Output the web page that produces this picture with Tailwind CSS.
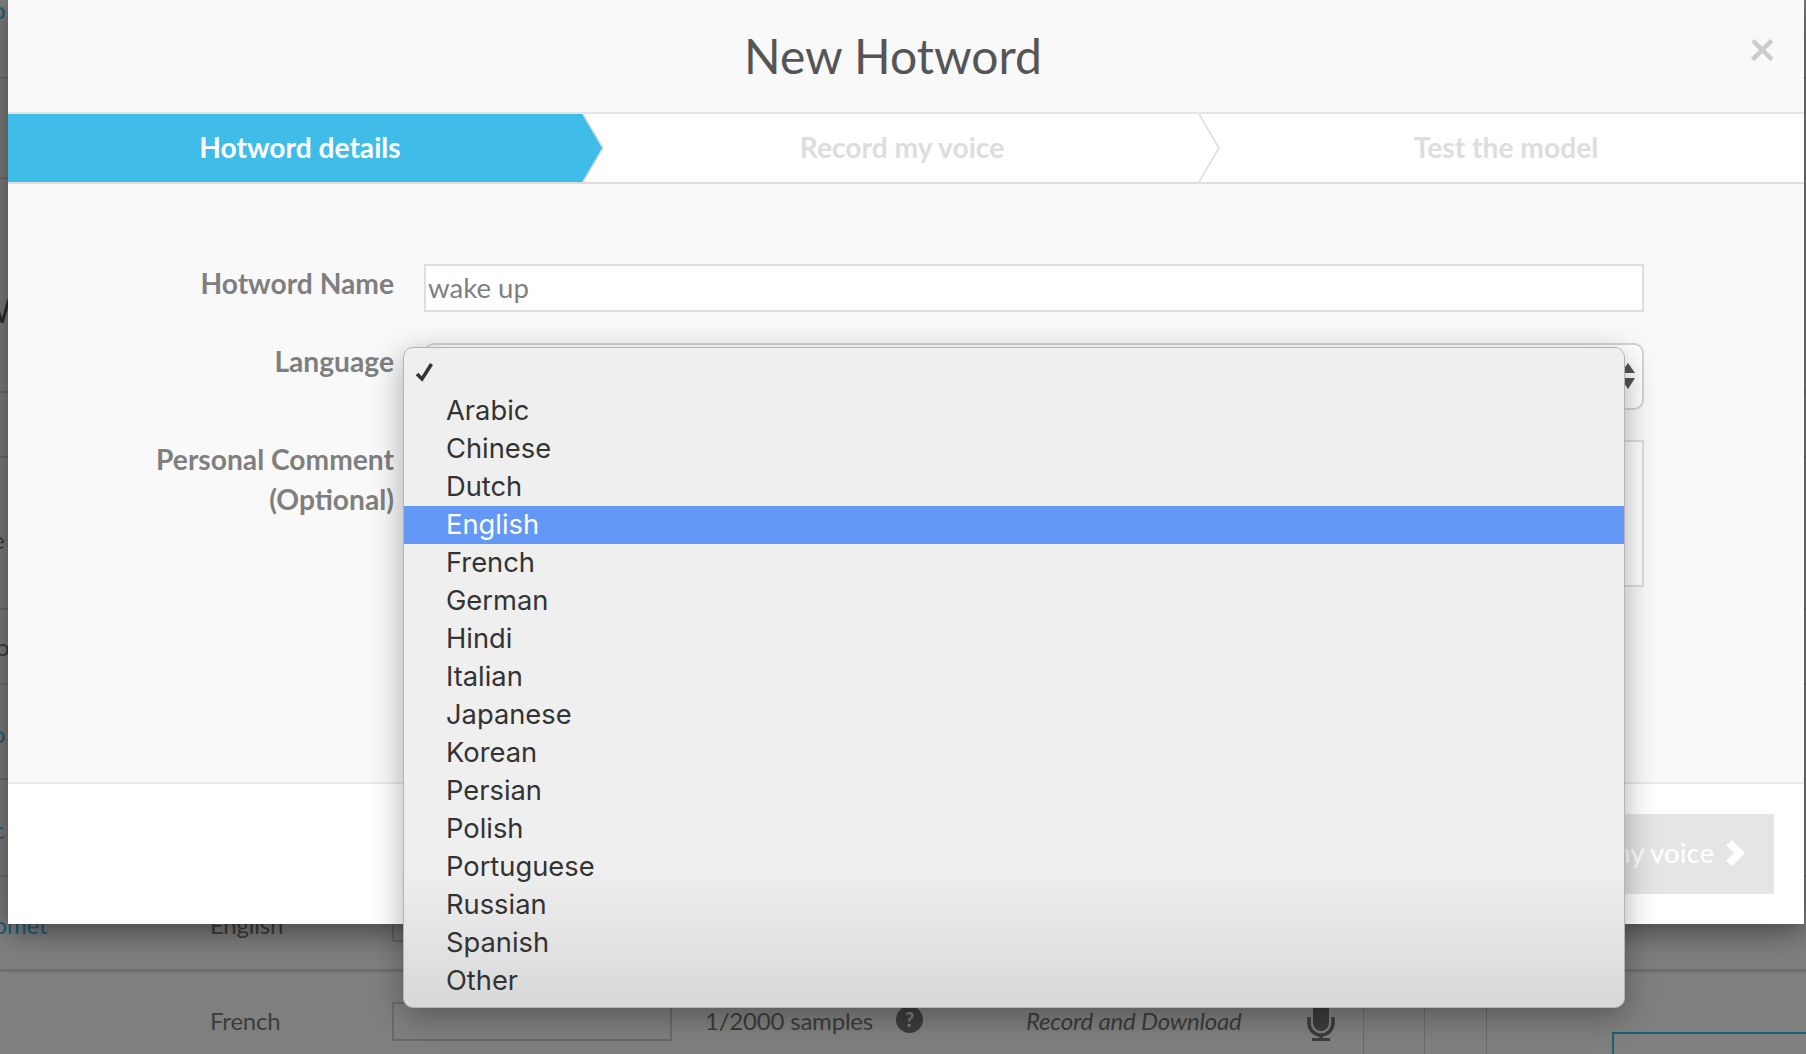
<!DOCTYPE html>
<html lang="en">
  <head>
    <meta charset="utf-8" />
    <meta name="viewport" content="width=device-width, initial-scale=1" />
    <title>New Hotword</title>
    <script src="https://cdn.jsdelivr.net/npm/@tailwindcss/browser@4"></script>
  </head>

  <body class="font-[Lato,sans-serif]">
    <div class="relative w-[1806px] h-[1054px] overflow-hidden bg-[#7f7f7f] text-[#3c3c3c] text-[24px] tracking-[-0.2px]">
      <!-- page behind the modal, only the edges show -->
      <div class="flex flex-col">
        <div class="h-[79px] border-b-2 border-[#6f6f6f] text-[#1c6078] leading-[20px] -ml-[8px]">o</div>
        <div class="h-[100px] border-b-2 border-[#6f6f6f]"></div>
        <div class="h-[214px] border-b-2 border-[#6f6f6f] pt-[108px] -ml-[22px] text-[32px] text-[#2c2c2c]">W</div>
        <div class="h-[65px] border-b-2 border-[#6f6f6f]"></div>
        <div class="h-[152px] border-b-2 border-[#6f6f6f] pt-[64px] -ml-[8px]">e</div>
        <div class="h-[75px] border-b-2 border-[#6f6f6f] pt-[19px] -ml-[4px]">on</div>
        <div class="h-[95px] border-b-2 border-[#6f6f6f] pt-[31px] -ml-[8px] text-[#1c6078]">o</div>
        <div class="h-[97px] border-b-2 border-[#6f6f6f] pt-[32px] -ml-[7px] text-[#1c6078]">c</div>
        <div class="h-[95px] border-b-[3px] border-[#6f6f6f] flex items-center">
          <div class="w-[232px] -ml-[22px] mt-[4px] shrink-0 text-[#1c6078]">Comet</div>
          <div class="w-[182px] mt-[4px] shrink-0">English</div>
          <div class="w-[280px] h-[37px] shrink-0 border-2 border-[#6a6a6a]"></div>
        </div>
        <div class="h-[98px] flex items-center">
          <div class="w-[210px] shrink-0"></div>
          <div class="w-[182px] shrink-0">French</div>
          <div class="w-[280px] h-[39px] shrink-0 border-2 border-[#6a6a6a]"></div>
          <div class="w-[191px] ml-[33px] shrink-0">1/2000 samples</div>
          <div class="w-[130px] -mt-[4px] shrink-0">
            <span class="w-[27px] h-[27px] rounded-full bg-[#3c3c3c] text-[#7f7f7f] font-bold text-[20px] flex items-center justify-center">?</span>
          </div>
          <div class="w-[281px] shrink-0 italic">Record and Download</div>
          <svg class="w-[28px] h-[42px] -mt-[2px] shrink-0" viewBox="0 0 28 42" fill="none" stroke="#3c3c3c">
            <rect x="6" y="0" width="16" height="32" rx="8" fill="#3c3c3c" stroke="none" />
            <path d="M2 18v6a12 12 0 0 0 24 0v-6M14 36v4" stroke-width="3.5" />
            <path d="M5 40.500h18" stroke-width="3" />
          </svg>
          <div class="ml-[28px] w-[61px] h-full shrink-0 border-l border-[#6a6a6a]"></div>
          <div class="w-[62px] h-full shrink-0 border-l border-[#6a6a6a]"></div>
          <div class="w-[126px] h-full shrink-0 border-l border-[#6a6a6a]"></div>
          <div class="flex-1 min-w-0 h-full pt-[60px]">
            <div class="h-full border-t-2 border-l-2 border-[#1a6077]"></div>
          </div>
        </div>
      </div>

      <!-- modal -->
      <div class="absolute left-[8px] top-0 w-[1796px] h-[924px] flex flex-col bg-[#f9f9f9] tracking-normal shadow-[0_6px_30px_rgba(0,0,0,0.5)]">
        <div class="relative h-[112px] shrink-0 flex items-center justify-center pr-[26px]">
          <h2 class="text-[48px] text-[#555555]">New Hotword</h2>
          <button class="absolute right-[28px] top-[24px] text-[48px] leading-[48px] font-bold text-[#cccccc]">×</button>
        </div>

        <div class="h-[72px] shrink-0 flex bg-white border-t-2 border-b-2 border-t-[#e5e5e5] border-b-[#dddddd] text-[28.2px] font-bold">
          <div class="relative w-[595px] h-[68px]">
            <div class="h-full pr-[11px] pb-[2px] flex items-center justify-center text-white bg-[#3fbde8] [clip-path:polygon(0_0,575px_0,595px_50%,575px_100%,0_100%)]">Hotword details</div>
            <svg class="absolute right-[-1px] top-0 w-[22px] h-[68px]" viewBox="0 0 22 68" fill="none" stroke="#dddddd" stroke-width="1.500">
              <path d="M1 0l20 34L1 68" />
            </svg>
          </div>
          <div class="relative w-[616px] h-[68px] pr-[18px] pb-[2px] flex items-center justify-center text-[#dddddd]">
            Record my voice
            <svg class="absolute right-[-1px] top-0 w-[22px] h-[68px]" viewBox="0 0 22 68" fill="none" stroke="#dddddd" stroke-width="1.500">
              <path d="M1 0l20 34L1 68" />
            </svg>
          </div>
          <div class="flex-1 h-[68px] pr-[11px] pb-[2px] flex items-center justify-center text-[#dddddd]">Test the model</div>
        </div>

        <form class="flex-1 pt-[80px] flex flex-col gap-[31px] text-[28.2px]">
          <div class="flex gap-[30px]">
            <label class="w-[386px] text-right font-bold text-[#7f7f7f] leading-[40px] -mt-[1px]">Hotword Name</label>
            <input type="text" value="wake up" class="w-[1220px] h-[48px] px-[2px] pb-[2px] bg-white border-2 border-[#dddddd] text-[#7f7f7f] text-[27.6px] outline-none" />
          </div>
          <div class="flex gap-[30px]">
            <label class="w-[386px] text-right font-bold text-[#7f7f7f] leading-[40px] -mt-[2px]">Language</label>
            <div class="relative w-[1220px] h-[67px] bg-white border-2 border-[#d5d5d5] rounded-[10px]">
              <svg class="absolute right-[7px] top-[18px] w-[14px] h-[28px]" viewBox="0 0 14 28" fill="#555555">
                <path d="M7 0l7 10H0zM0 15h14l-7 11z" />
              </svg>
            </div>
          </div>
          <div class="flex gap-[30px] -mt-[1px]">
            <label class="w-[386px] text-right font-bold text-[#7f7f7f] leading-[40px] -mt-[1px]">Personal Comment<br />(Optional)</label>
            <textarea class="w-[1220px] h-[147px] bg-white border-2 border-[#dddddd] outline-none resize-none"></textarea>
          </div>
        </form>

        <div class="h-[142px] shrink-0 flex items-center justify-end pr-[30px] bg-white border-t-2 border-[#e8e8e8]">
          <button class="h-[80px] px-[29px] pb-[2px] flex items-center gap-[12px] bg-[#e5e5e5] text-white text-[27.6px] font-medium">
            Record my voice
            <svg class="w-[19px] h-[26px]" viewBox="0 0 19 26" fill="#ffffff">
              <path d="M6 0l13 13L6 26l-6-5 8-8-8-8z" />
            </svg>
          </button>
        </div>
      </div>

      <!-- native select popup -->
      <div class="absolute left-[403px] top-[347px] w-[1222px] h-[661px] pt-[6px] rounded-[10px] border border-[#b4b4b4] bg-[linear-gradient(to_bottom,#efefef_0%,#efefef_79%,#d8d8d8_100%)] shadow-[0_8px_32px_rgba(0,0,0,0.32)] font-[Inter,sans-serif] text-[27.3px] tracking-normal text-[#333333]">
        <div class="relative h-[38px] pl-[42px]">
          <svg class="absolute left-[11px] top-[8px] w-[19px] h-[20px]" viewBox="0 0 19 20" fill="none" stroke="#333333" stroke-width="3.500">
            <path d="M2 12l5 5L16.500 2" />
          </svg>
        </div>
        <div class="h-[38px] pl-[42px] leading-[38px]">Arabic</div>
        <div class="h-[38px] pl-[42px] leading-[38px]">Chinese</div>
        <div class="h-[38px] pl-[42px] leading-[38px]">Dutch</div>
        <div class="h-[38px] pl-[42px] leading-[38px] bg-[#6398f6] text-white">English</div>
        <div class="h-[38px] pl-[42px] leading-[38px]">French</div>
        <div class="h-[38px] pl-[42px] leading-[38px]">German</div>
        <div class="h-[38px] pl-[42px] leading-[38px]">Hindi</div>
        <div class="h-[38px] pl-[42px] leading-[38px]">Italian</div>
        <div class="h-[38px] pl-[42px] leading-[38px]">Japanese</div>
        <div class="h-[38px] pl-[42px] leading-[38px]">Korean</div>
        <div class="h-[38px] pl-[42px] leading-[38px]">Persian</div>
        <div class="h-[38px] pl-[42px] leading-[38px]">Polish</div>
        <div class="h-[38px] pl-[42px] leading-[38px]">Portuguese</div>
        <div class="h-[38px] pl-[42px] leading-[38px]">Russian</div>
        <div class="h-[38px] pl-[42px] leading-[38px]">Spanish</div>
        <div class="h-[38px] pl-[42px] leading-[38px]">Other</div>
      </div>
    </div>
  </body>
</html>
